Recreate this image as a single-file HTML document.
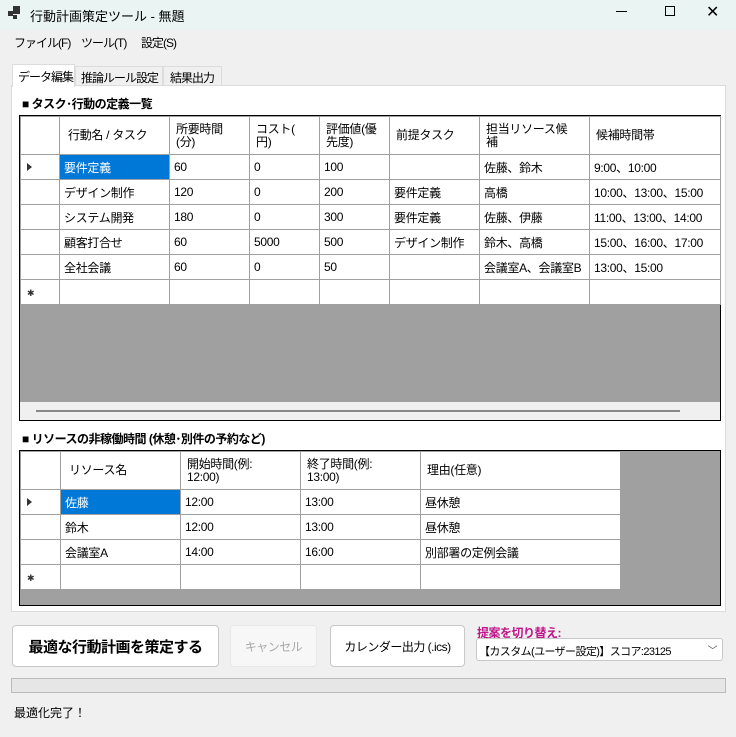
<!DOCTYPE html><html><head><meta charset="utf-8"><style>
*{box-sizing:border-box;margin:0;padding:0}
body{width:736px;height:737px;background:#f0f0f0;font-family:"Liberation Sans","Noto Sans CJK JP",sans-serif;font-size:12px;color:#000;position:relative;overflow:hidden;white-space:nowrap}
.a{position:absolute;white-space:nowrap}
table{border-collapse:collapse;position:absolute;table-layout:fixed}
td{border:1px solid #a0a0a0;height:25px;padding:0 4px;font-size:12px;white-space:nowrap;overflow:hidden;background:#fff;letter-spacing:-0.3px}
tr.h td{height:38px;padding:0 6px;line-height:13px;white-space:normal}
td.rh{padding:0}
.sel{background:#0078d7;color:#fff}
.tri{display:inline-block;width:0;height:0;border-left:5px solid #333;border-top:4px solid transparent;border-bottom:4px solid transparent;margin-left:6px}
.star{font-size:9px;margin-left:6px;color:#333}
.btn{position:absolute;background:#fff;border:1px solid #c8c8c8;border-radius:4px;display:flex;align-items:center;justify-content:center;letter-spacing:-0.5px}
.sm{letter-spacing:-1px}
</style></head><body>
<div class="a" style="left:0;top:0;width:736px;height:30px;background:#eaf5f3"></div>
<div class="a" style="left:8px;top:11px;width:5px;height:5px;background:#333"></div>
<div class="a" style="left:13px;top:6px;width:7px;height:8px;background:#333"></div>
<div class="a" style="left:13px;top:15px;width:4px;height:4px;background:#333"></div>
<div class="a" style="left:30px;top:6px;font-size:13px">行動計画策定ツール - 無題</div>
<div class="a" style="left:616px;top:11px;width:11px;height:1px;background:#000"></div>
<div class="a" style="left:665px;top:6px;width:10px;height:10px;border:1px solid #000"></div>
<div class="a" style="left:706px;top:2px;font-size:16px">✕</div>
<div class="a sm" style="left:14px;top:34px">ファイル(F)</div>
<div class="a sm" style="left:81px;top:34px">ツール(T)</div>
<div class="a sm" style="left:141px;top:34px">設定(S)</div>
<div class="a" style="left:11px;top:85px;width:715px;height:527px;background:#fff;border:1px solid #dcdcdc"></div>
<div class="a sm" style="left:12px;top:64px;width:63px;height:23px;background:#fff;border:1px solid #dcdcdc;border-bottom:none;padding:3px 0 0 5px">データ編集</div>
<div class="a sm" style="left:75px;top:66px;width:88px;height:20px;border:1px solid #dcdcdc;border-bottom:none;padding:2px 0 0 5px">推論ルール設定</div>
<div class="a sm" style="left:163px;top:66px;width:59px;height:20px;border:1px solid #dcdcdc;border-bottom:none;padding:2px 0 0 6px">結果出力</div>
<div class="a" style="left:22px;top:95px;font-weight:bold;letter-spacing:-0.5px">■ タスク･行動の定義一覧</div>
<div class="a" style="left:19px;top:115px;width:702px;height:306px;background:#a0a0a0;border:1px solid #000"></div>
<div class="a" style="left:20px;top:402px;width:700px;height:18px;background:#f0f0f0"></div>
<div class="a" style="left:36px;top:410px;width:644px;height:2px;background:#888"></div>
<table style="left:20px;top:116px;width:700px">
<colgroup><col style="width:39px"><col style="width:110px"><col style="width:80px"><col style="width:70px"><col style="width:70px"><col style="width:90px"><col style="width:110px"><col style="width:131px"></colgroup>
<tr class="h"><td></td><td style="padding-left:8px">行動名 / タスク</td><td>所要時間<br>(分)</td><td>コスト(<br>円)</td><td>評価値(優<br>先度)</td><td>前提タスク</td><td>担当リソース候<br>補</td><td>候補時間帯</td></tr>
<tr><td class="rh"><span class="tri"></span></td><td class="sel">要件定義</td><td>60</td><td>0</td><td>100</td><td></td><td>佐藤、鈴木</td><td>9:00、10:00</td></tr>
<tr><td></td><td>デザイン制作</td><td>120</td><td>0</td><td>200</td><td>要件定義</td><td>高橋</td><td>10:00、13:00、15:00</td></tr>
<tr><td></td><td>システム開発</td><td>180</td><td>0</td><td>300</td><td>要件定義</td><td>佐藤、伊藤</td><td>11:00、13:00、14:00</td></tr>
<tr><td></td><td>顧客打合せ</td><td>60</td><td>5000</td><td>500</td><td>デザイン制作</td><td>鈴木、高橋</td><td>15:00、16:00、17:00</td></tr>
<tr><td></td><td>全社会議</td><td>60</td><td>0</td><td>50</td><td></td><td>会議室A、会議室B</td><td>13:00、15:00</td></tr>
<tr><td class="rh"><span class="star">✱</span></td><td></td><td></td><td></td><td></td><td></td><td></td><td></td></tr>
</table>
<div class="a" style="left:22px;top:430px;font-weight:bold;letter-spacing:-0.5px">■ リソースの非稼働時間 (休憩･別件の予約など)</div>
<div class="a" style="left:19px;top:450px;width:702px;height:156px;background:#a0a0a0;border:1px solid #000"></div>
<table style="left:20px;top:451px;width:600px">
<colgroup><col style="width:40px"><col style="width:120px"><col style="width:120px"><col style="width:120px"><col style="width:200px"></colgroup>
<tr class="h"><td></td><td style="padding-left:8px">リソース名</td><td>開始時間(例:<br>12:00)</td><td>終了時間(例:<br>13:00)</td><td>理由(任意)</td></tr>
<tr><td class="rh"><span class="tri"></span></td><td class="sel">佐藤</td><td>12:00</td><td>13:00</td><td>昼休憩</td></tr>
<tr><td></td><td>鈴木</td><td>12:00</td><td>13:00</td><td>昼休憩</td></tr>
<tr><td></td><td>会議室A</td><td>14:00</td><td>16:00</td><td>別部署の定例会議</td></tr>
<tr><td class="rh"><span class="star">✱</span></td><td></td><td></td><td></td><td></td></tr>
</table>
<div class="btn" style="left:12px;top:625px;width:207px;height:42px;font-size:15px;font-weight:bold">最適な行動計画を策定する</div>
<div class="btn" style="left:230px;top:625px;width:87px;height:42px;background:#f7f7f7;border-color:#e8e8e8;color:#a8a8a8">キャンセル</div>
<div class="btn" style="left:330px;top:625px;width:135px;height:42px">カレンダー出力 (.ics)</div>
<div class="a" style="left:477px;top:624px;color:#c0158a;font-weight:bold;letter-spacing:-0.5px">提案を切り替え:</div>
<div class="a" style="left:476px;top:638px;width:247px;height:23px;background:#fff;border:1px solid #c8c8c8;border-radius:3px;padding:4px 0 0 2px;font-size:11px;letter-spacing:-0.6px">【カスタム(ユーザー設定)】スコア:23125<span style="position:absolute;right:5px;top:3px;font-size:10px;color:#555">﹀</span></div>
<div class="a" style="left:11px;top:678px;width:715px;height:15px;background:#e6e6e6;border:1px solid #bcbcbc"></div>
<div class="a" style="left:14px;top:704px">最適化完了！</div>
</body></html>
